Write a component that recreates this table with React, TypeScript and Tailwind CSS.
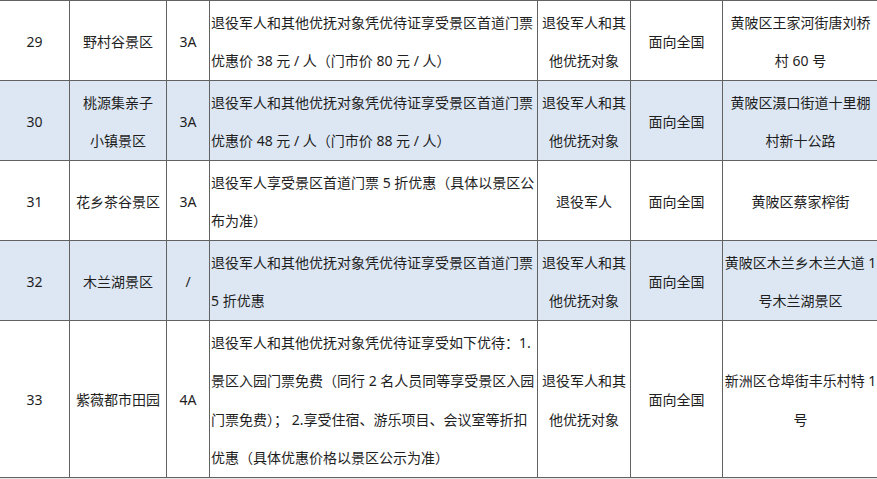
import React from 'react';

type Row = {
  no: string;
  name: string[];
  grade: string;
  benefit: string[];
  target: string[];
  scope: string;
  address: string[];
  shaded?: boolean;
};

const rows: Row[] = [
  {
    no: '29',
    name: ['野村谷景区'],
    grade: '3A',
    benefit: ['退役军人和其他优抚对象凭优待证享受景区首道门票', '优惠价 38 元 / 人（门市价 80 元 / 人）'],
    target: ['退役军人和其', '他优抚对象'],
    scope: '面向全国',
    address: ['黄陂区王家河街唐刘桥', '村 60 号'],
  },
  {
    no: '30',
    name: ['桃源集亲子', '小镇景区'],
    grade: '3A',
    benefit: ['退役军人和其他优抚对象凭优待证享受景区首道门票', '优惠价 48 元 / 人（门市价 88 元 / 人）'],
    target: ['退役军人和其', '他优抚对象'],
    scope: '面向全国',
    address: ['黄陂区滠口街道十里棚', '村新十公路'],
    shaded: true,
  },
  {
    no: '31',
    name: ['花乡茶谷景区'],
    grade: '3A',
    benefit: ['退役军人享受景区首道门票 5 折优惠（具体以景区公', '布为准）'],
    target: ['退役军人'],
    scope: '面向全国',
    address: ['黄陂区蔡家榨街'],
  },
  {
    no: '32',
    name: ['木兰湖景区'],
    grade: '/',
    benefit: ['退役军人和其他优抚对象凭优待证享受景区首道门票', '5 折优惠'],
    target: ['退役军人和其', '他优抚对象'],
    scope: '面向全国',
    address: ['黄陂区木兰乡木兰大道 1', '号木兰湖景区'],
    shaded: true,
  },
  {
    no: '33',
    name: ['紫薇都市田园'],
    grade: '4A',
    benefit: [
      '退役军人和其他优抚对象凭优待证享受如下优待：1.',
      '景区入园门票免费（同行 2 名人员同等享受景区入园',
      '门票免费）； 2.享受住宿、游乐项目、会议室等折扣',
      '优惠（具体优惠价格以景区公示为准）',
    ],
    target: ['退役军人和其', '他优抚对象'],
    scope: '面向全国',
    address: ['新洲区仓埠街丰乐村特 1', '号'],
  },
];

const Lines = ({ lines }: { lines: string[] }) => (
  <div>
    {lines.map((l, i) => (
      <div key={i} className="whitespace-pre">
        {l}
      </div>
    ))}
  </div>
);

export default function App() {
  return (
    <div className="w-[877px] h-[479px] overflow-hidden bg-[#e6e6e6] font-['Noto_Sans','Noto_Sans_CJK_SC',sans-serif] text-[14px] leading-[38.5px] text-[#1e1e1e]">
      <div className="grid grid-cols-[69px_96px_42px_327px_92px_91px_155px] grid-rows-[79px_79px_79px_79px_156px] gap-px py-px bg-[#626262] w-[878px]">
        {rows.map((r) => {
          const bg = r.shaded ? 'bg-[#dde7f3]' : 'bg-white';
          const center = `${bg} flex items-center justify-center text-center pt-[3px]`;
          return (
            <React.Fragment key={r.no}>
              <div className={center}>{r.no}</div>
              <div className={center}>
                <Lines lines={r.name} />
              </div>
              <div className={center}>{r.grade}</div>
              <div className={`${bg} flex items-center pl-px pt-[3px]`}>
                <Lines lines={r.benefit} />
              </div>
              <div className={center}>
                <Lines lines={r.target} />
              </div>
              <div className={center}>{r.scope}</div>
              <div className={center}>
                <Lines lines={r.address} />
              </div>
            </React.Fragment>
          );
        })}
      </div>
    </div>
  );
}
